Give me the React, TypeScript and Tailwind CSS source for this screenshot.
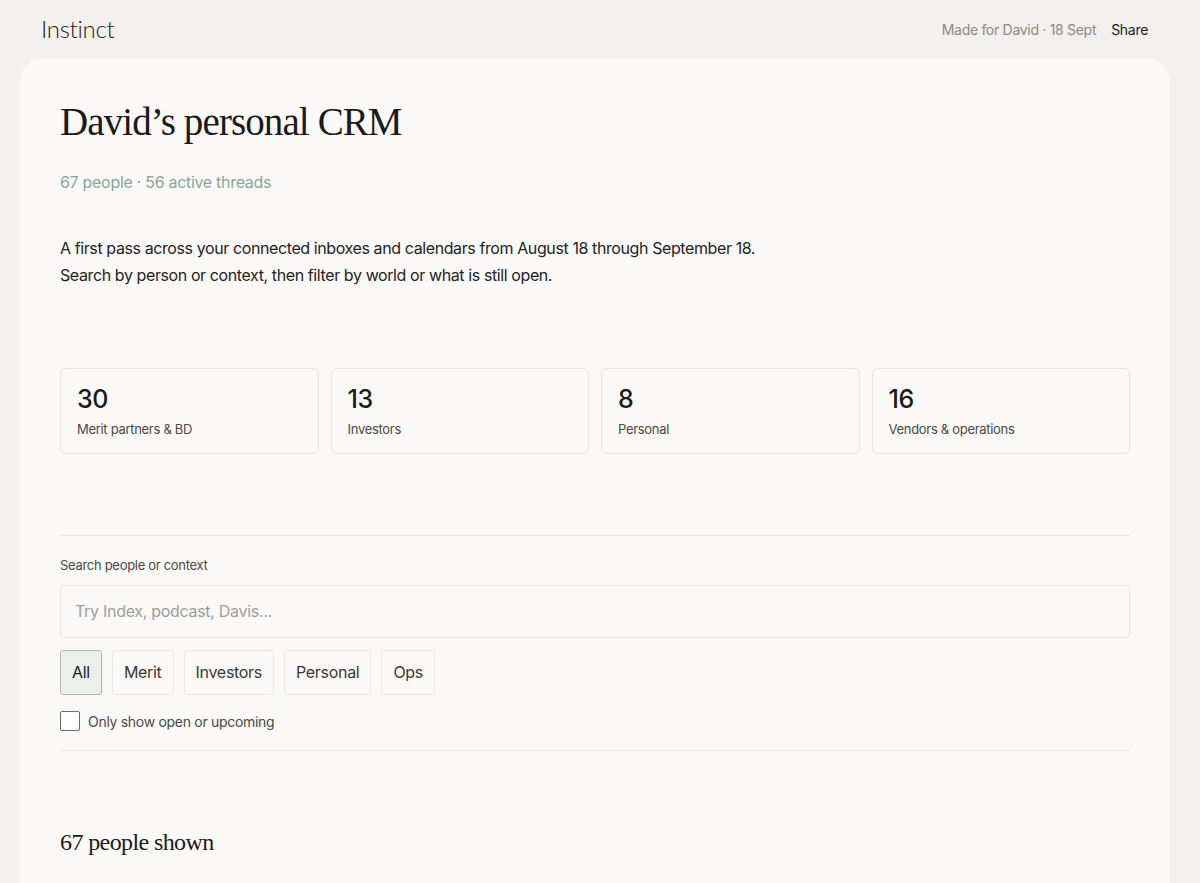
import { useState } from 'react';

const stats = [
  { count: 30, label: 'Merit partners & BD' },
  { count: 13, label: 'Investors' },
  { count: 8, label: 'Personal' },
  { count: 16, label: 'Vendors & operations' },
];

const worlds = ['All', 'Merit', 'Investors', 'Personal', 'Ops'];

export default function App() {
  const [world, setWorld] = useState('All');
  const [openOnly, setOpenOnly] = useState(false);
  const [query, setQuery] = useState('');

  return (
    <div className="min-h-screen bg-[#f3f0ed] font-['Inter','Liberation_Sans',sans-serif] tracking-[-0.3px] text-[#1c1c1a]">
      {/* Top bar */}
      <header className="flex h-[58px] items-center justify-between pl-[41px] pr-[52px]">
        <div className="font-['Lato','Liberation_Sans',sans-serif] text-[24px] font-light tracking-[-0.3px] text-[#222]">
          Instinct
        </div>
        <div className="flex items-center gap-[15px] text-[14px]">
          <span className="text-[#8d8a86]">Made for David · 18 Sept</span>
          <button className="text-[#1c1c1a]">Share</button>
        </div>
      </header>

      <main className="mx-[20px] mr-[30px] rounded-t-[24px] bg-[#faf9f7] px-[40px] pb-10 pt-[38px]">
        <h1 className="font-['Liberation_Serif',serif] text-[39px] leading-[52px] tracking-[-0.9px] text-[#1a1a18]">
          David’s personal CRM
        </h1>
        <p className="mt-[22px] text-[16px] text-[#8ba696]">67 people · 56 active threads</p>

        <div className="mt-[41px] text-[16px] leading-[27px] tracking-[-0.4px] text-[#24231f]">
          <p>A first pass across your connected inboxes and calendars from August 18 through September 18.</p>
          <p>Search by person or context, then filter by world or what is still open.</p>
        </div>

        {/* Counts per world */}
        <div className="mt-[79px] grid grid-cols-4 gap-[12px]">
          {stats.map((s) => (
            <div key={s.label} className="h-[86px] rounded-[6px] border border-[#e8e5e1] bg-[#faf9f7] px-[16px] pt-[14px]">
              <div className="text-[25px] font-medium leading-[32px] text-[#1a1a18]">{s.count}</div>
              <div className="mt-[5px] text-[13px] text-[#4b4945]">{s.label}</div>
            </div>
          ))}
        </div>

        <div className="mt-[81px] border-t border-[#e9e6e2]" />

        <label className="mt-[20px] block text-[13px] text-[#4b4945]">Search people or context</label>
        <input
          value={query}
          onChange={(e) => setQuery(e.target.value)}
          placeholder="Try Index, podcast, Davis..."
          className="mt-[9px] h-[53px] w-full rounded-[3px] border border-[#e8e5e1] bg-[#faf9f7] px-[14px] text-[16px] text-[#1c1c1a] outline-none placeholder:text-[#a19e99]"
        />

        <div className="mt-[12px] flex gap-[10px]">
          {worlds.map((w) => (
            <button
              key={w}
              onClick={() => setWorld(w)}
              className={`h-[45px] rounded-[3px] border px-[11px] text-[16px] ${
                world === w
                  ? 'border-[#a9bab0] bg-[#ebf0ec] text-[#1c1c1a]'
                  : 'border-[#ebe8e4] bg-[#faf9f7] text-[#3b3935]'
              }`}
            >
              {w}
            </button>
          ))}
        </div>

        <label className="mt-[16px] flex cursor-pointer items-center gap-[8px]">
          <input
            type="checkbox"
            checked={openOnly}
            onChange={() => setOpenOnly(!openOnly)}
            className="h-[20px] w-[20px] appearance-none rounded-[2px] border border-[#6e6b67] bg-white checked:bg-[#5f7a6a]"
          />
          <span className="text-[14px] text-[#4b4945]">Only show open or upcoming</span>
        </label>

        <div className="mt-[18px] border-t border-[#e9e6e2]" />

        <h2 className="mt-[73px] font-['Liberation_Serif',serif] text-[24px] tracking-[-0.6px] text-[#1a1a18]">
          67 people shown
        </h2>
      </main>
    </div>
  );
}
